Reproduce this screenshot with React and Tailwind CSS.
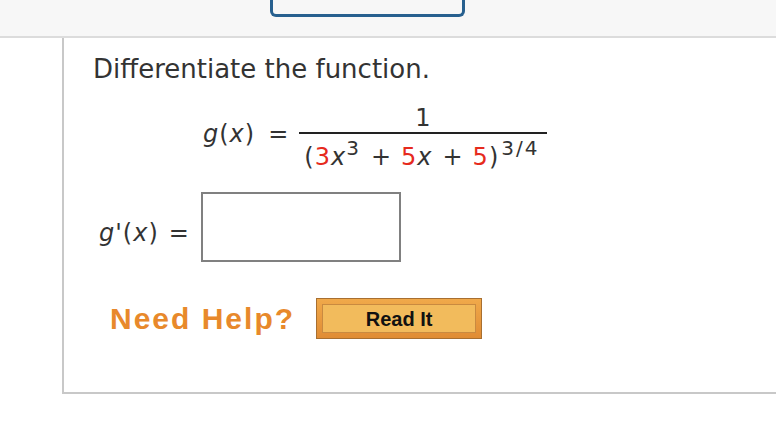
export default function App() {
  const font = { fontFamily: '"DejaVu Sans", Verdana, sans-serif' };
  const red = "text-[#e62a1d]";
  return (
    <div className="w-[776px] h-[426px] bg-white overflow-hidden" style={font}>
      <div className="h-[38px] bg-[#f7f7f7] border-b-2 border-[#dcdcdc] flex pl-[270px]">
        <div className="w-[195px] h-[17px] border-[3px] border-t-0 border-[#27608f] rounded-b-[6px]" />
      </div>
      <div className="ml-[62px] h-[356px] border-l-2 border-b-2 border-[#c8c8c8] pl-[29px] pt-[14px] text-[#333]">
        <div className="text-[26px] leading-[34px]">Differentiate the function.</div>
        <div className="flex items-start pl-[110px] mt-[19px] text-[24px] tracking-[1px]">
          <span className="mt-[15px] leading-[28px]">
            <i>g</i>(<i>x</i>)
          </span>
          <span className="mt-[15px] leading-[28px] ml-[13px] mr-[10px]">=</span>
          <div className="flex flex-col items-stretch">
            <div className="leading-[27px] text-center">1</div>
            <div className="h-[2px] bg-[#222]" />
            <div className="leading-[46px] pl-[5px] pr-[8px] whitespace-nowrap">
              (<span className={red}>3</span>
              <i>x</i>
              <sup className="text-[20px]">3</sup>
              <span className="ml-[11px] mr-[9px]">+</span>
              <span className={red}>5</span>
              <i>x</i>
              <span className="ml-[10px] mr-[9px]">+</span>
              <span className={red}>5</span>)
              <sup className="text-[20px] ml-[2px] tracking-[2px]">3/4</sup>
            </div>
          </div>
        </div>
        <div className="flex items-start mt-[12px] text-[24px] tracking-[1px]">
          <span className="mt-[27px] leading-[28px] ml-[6px]">
            <i>g</i>'(<i>x</i>)
          </span>
          <span className="mt-[27px] leading-[28px] ml-[10px] mr-[11px]">=</span>
          <div className="w-[200px] h-[70px] border-2 border-[#808080] bg-white" />
        </div>
        <div className="flex items-center mt-[34px] pl-[17px]" style={{ fontFamily: '"Liberation Sans", Arial, sans-serif' }}>
          <span className="text-[30px] font-bold text-[#e8892b] tracking-[2px]">Need Help?</span>
          <div className="ml-[21px] w-[166px] h-[41px] border border-[#a86f30] bg-gradient-to-b from-[#f0a94a] to-[#e08c34] p-[5px]">
            <div className="w-full h-full border border-[#c98a40] bg-[#f2bb5c] flex items-center justify-center text-[20px] font-bold text-[#111]">
              Read It
            </div>
          </div>
        </div>
      </div>
    </div>
  );
}
